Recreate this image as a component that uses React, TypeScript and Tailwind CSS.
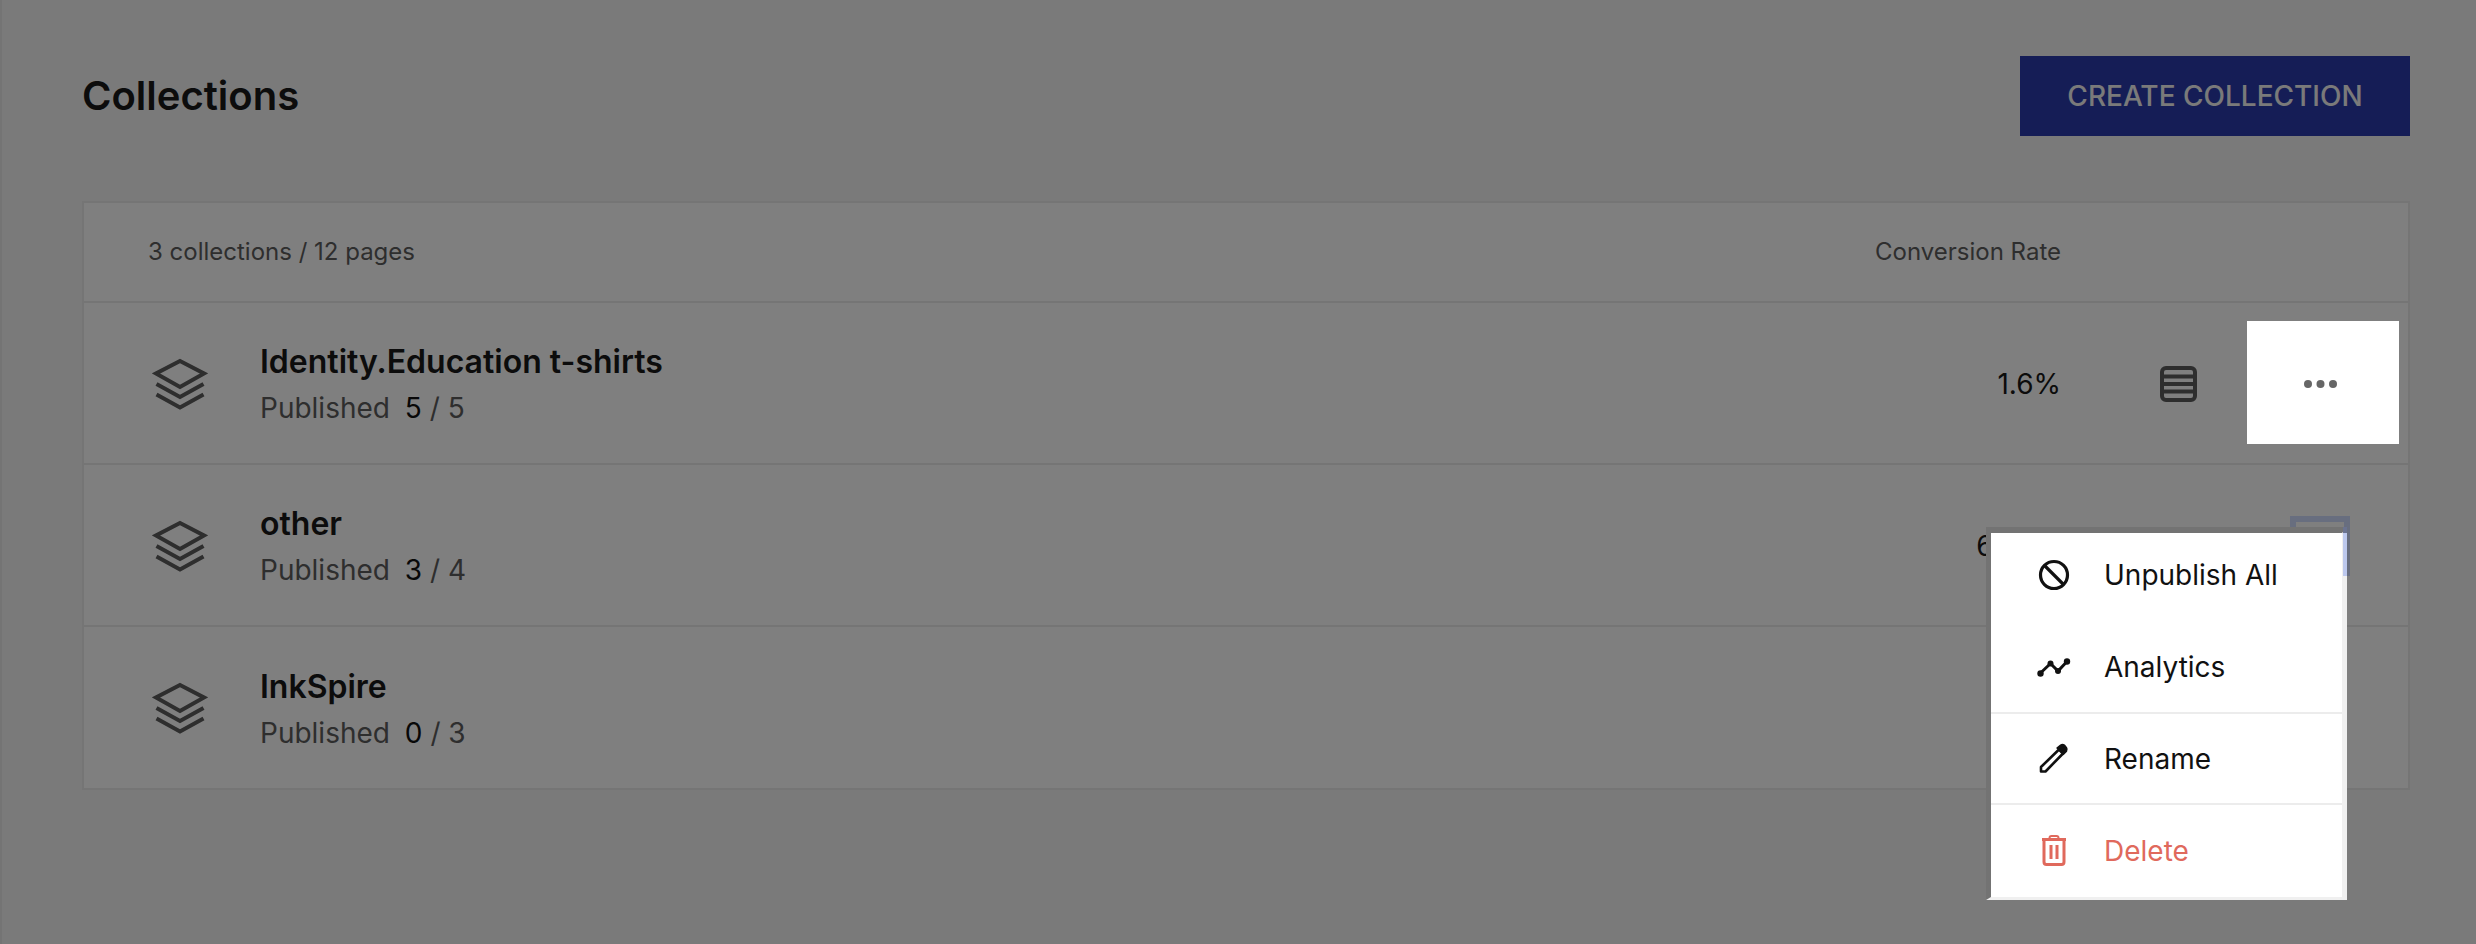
import React from "react";

const Layers = () => (
  <svg width="56" height="52" viewBox="0 0 56 52" fill="none" stroke="#5c5c5c" strokeWidth="4" className="mt-[1px] shrink-0">
    <path d="M28 3 L52 15.5 L28 29 L4 15.5 Z" />
    <path d="M4.5 26 L28 39 L51.5 26" />
    <path d="M4.5 36.5 L28 49.5 L51.5 36.5" />
  </svg>
);

const ListIcon = () => (
  <svg width="37" height="36" viewBox="0 0 37 36" fill="none" stroke="#5c5c5c" className="mt-[2px] shrink-0">
    <rect x="2" y="2" width="33" height="32" rx="4" strokeWidth="4" />
    <path d="M2 10.5 H35 M2 18 H35 M2 25.5 H35" strokeWidth="4" />
  </svg>
);

const Dots = () => (
  <svg width="33" height="10" viewBox="0 0 33 10" fill="#666" className="shrink-0">
    <circle cx="4" cy="5" r="4" />
    <circle cx="16.5" cy="5" r="4" />
    <circle cx="29" cy="5" r="4" />
  </svg>
);

const BanIcon = () => (
  <svg width="34" height="34" viewBox="0 0 34 34" fill="none" stroke="#111" strokeWidth="3.2" className="shrink-0">
    <circle cx="17" cy="17" r="13.5" />
    <path d="M7.5 7.5 L26.5 26.5" />
  </svg>
);

const ChartIcon = () => (
  <svg width="34" height="34" viewBox="0 0 34 34" fill="none" stroke="#111" strokeWidth="3" className="shrink-0">
    <path d="M3 23.5 L13.5 13.5 L21 21 L30 11.5" />
    <g fill="#111" stroke="none">
      <circle cx="3.5" cy="23.5" r="3.2" />
      <circle cx="13.5" cy="13.5" r="3" />
      <circle cx="21" cy="21" r="3" />
      <circle cx="30" cy="11.5" r="3.2" />
    </g>
  </svg>
);

const PencilIcon = () => (
  <svg width="34" height="34" viewBox="0 0 34 34" fill="none" stroke="#111" strokeWidth="2.6" className="shrink-0">
    <path d="M4 29.5 L4 25 L22 7.5 L26 11.5 L8.5 29.5 Z" strokeLinejoin="round" />
    <path d="M21 6 L24 3.5 Q25.5 2.5 27 3.5 L29 6 Q30 7.5 29 9 L26.5 11.5 Z" fill="#111" />
  </svg>
);

const TrashIcon = () => (
  <svg width="34" height="34" viewBox="0 0 34 34" fill="none" stroke="#e0695c" strokeWidth="3" className="shrink-0">
    <path d="M5 5.5 H29" />
    <path d="M12.5 4 Q12.5 2 14.5 2 H19.5 Q21.5 2 21.5 4" strokeWidth="2" />
    <path d="M7 6 V28 Q7 30.5 9.5 30.5 H24.5 Q27 30.5 27 28 V6" />
    <path d="M14 11 V25 M20 11 V25" />
  </svg>
);

function Row({ name, published, total, rate, children }: { name: string; published: string; total: string; rate: string; children: React.ReactNode }) {
  return (
    <div className="flex h-[162px] items-center border-b-2 border-[#ebebeb] pl-[68px] last:h-[161px] last:border-b-0">
      <Layers />
      <div className="mt-[2px] ml-[52px] flex flex-col">
        <div className="text-[32px] leading-[44px] font-semibold text-[#181818]">{name}</div>
        <div className="mt-[4px] text-[28px] leading-[40px] text-[#5c5c5c]">
          Published <span className="ml-[7px] text-[#111]">{published}</span> / {total}
        </div>
      </div>
      <div className="mt-[1px] flex-1 pr-[99px] text-right text-[28px] leading-[40px] text-[#181818]">{rate}</div>
      <ListIcon />
      <div className="ml-[50px] flex w-[152px] shrink-0 items-center justify-center">{children}</div>
      <div className="w-[9px] shrink-0" />
    </div>
  );
}

export default function App() {
  return (
    <div className="relative h-[944px] overflow-hidden border-l-2 border-[#e8e8e8] bg-[#f5f5f5] pt-[56px] pr-[66px] pl-[80px] font-['Inter',sans-serif]">
      <div className="flex h-[80px] items-center justify-between">
        <h1 className="text-[40px] font-semibold text-[#181818]">Collections</h1>
        <button className="h-[80px] w-[390px] bg-[#2a3aac] text-[28px] font-medium text-[#f5f5f5]">CREATE COLLECTION</button>
      </div>

      <div className="mt-[65px] border-2 border-[#ebebeb] bg-white">
        <div className="flex h-[100px] items-center justify-between border-b-2 border-[#ebebeb] pr-[347px] pl-[64px] text-[24px] text-[#5c5c5c]">
          <span>3 collections / 12 pages</span>
          <span>Conversion Rate</span>
        </div>
        <Row name="Identity.Education t-shirts" published="5" total="5" rate="1.6%">
          <button className="relative z-20 mt-[-1px] flex h-[123px] w-[152px] items-center justify-center bg-white pt-[2px] pr-[6px]">
            <Dots />
          </button>
        </Row>
        <Row name="other" published="3" total="4" rate="66.7%">
          <div className="mt-[2px] mr-[6px] flex h-[60px] w-[60px] items-center justify-center border-[6px] border-[#d0dcff] bg-white" />
        </Row>
        <Row name="InkSpire" published="0" total="3" rate="0%">
          <div className="mr-[6px] flex h-[60px] w-[60px] items-center justify-center" />
        </Row>
      </div>

      <div className="fixed inset-0 z-10 bg-black/50" />

      <div className="fixed top-[527px] left-[1986px] z-30 w-[361px] border-t-[6px] border-r-[5px] border-b-[3px] border-l-[5px] border-t-[#737373] border-r-[#f0f0f0] border-b-[#f0f0f0] border-l-[#737373] bg-white text-[28px] text-[#111]">
        <div className="flex h-[88px] items-center gap-[33px] pb-[4px] pl-[46px]"><BanIcon />Unpublish All</div>
        <div className="flex h-[91px] items-center gap-[33px] pl-[46px]"><ChartIcon />Analytics</div>
        <div className="flex h-[91px] items-center gap-[33px] border-t-2 border-[#ececec] pl-[46px]"><PencilIcon />Rename</div>
        <div className="flex h-[94px] items-center gap-[33px] border-t-2 border-[#ececec] pl-[46px] text-[#e0695c]"><TrashIcon />Delete</div>
      </div>
      <div className="fixed top-[533px] left-[2343px] z-40 h-[43px] w-[4px] bg-[#bcc8ee]" />
      <div className="fixed top-[527px] left-[2343px] z-40 h-[6px] w-[4px] bg-[#6b7390]" />
    </div>
  );
}
